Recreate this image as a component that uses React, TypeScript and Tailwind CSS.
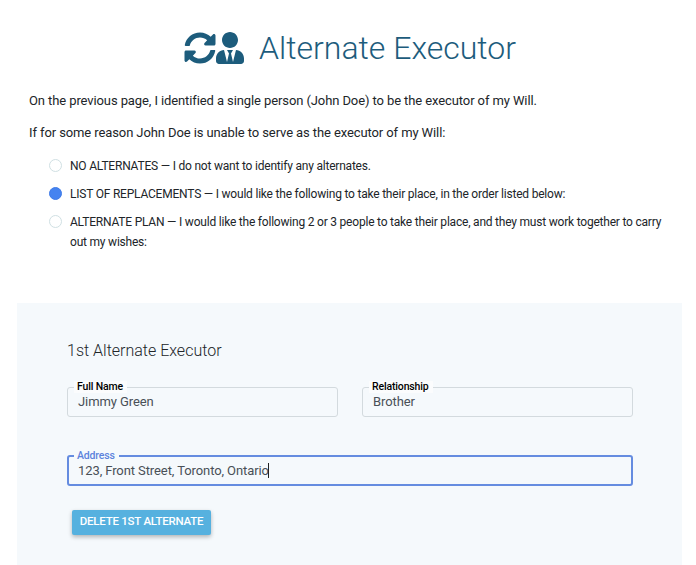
import { FaSyncAlt, FaUserTie } from "react-icons/fa";

function Option({ checked, text }: { checked?: boolean; text: string }) {
  return (
    <label className="flex gap-2">
      <span
        className={`mt-[3px] h-[13px] w-[13px] shrink-0 rounded-full border ${
          checked ? "border-[#3f7be8] bg-[#4583f0]" : "border-[#d0e0e3] bg-white"
        }`}
      />
      <span className="text-[12px] leading-5 tracking-[-0.21px]">{text}</span>
    </label>
  );
}

function Field({ label, value, focused }: { label: string; value: string; focused?: boolean }) {
  return (
    <fieldset
      className={`flex h-[36px] min-w-0 flex-1 rounded-[3px] ${
        focused ? "border-2 border-[#658ce0] pl-[9px]" : "border border-[#d3dade] pl-[10px]"
      }`}
    >
      <legend
        className={`-ml-[4px] h-[12px] pr-1 pl-[3px] text-[10.5px] leading-[12px] font-medium tracking-[-0.15px] ${
          focused ? "text-[#5c83dc]" : "bg-[#fbfcfd] text-black"
        }`}
      >
        {label}
      </legend>
      <span className="flex h-[17px] items-center text-[13px] leading-[17px] tracking-[-0.09px] text-[#495057]">
        {value}
        {focused && <span className="-ml-px h-[15px] w-px bg-[#222]" />}
      </span>
    </fieldset>
  );
}

export default function App() {
  return (
    <main className="h-[565px] w-[696px] overflow-hidden bg-white font-['Roboto','Liberation_Sans',sans-serif] text-[#212529]">
      <h1 className="flex h-[64px] items-center pt-[31px] pl-[184px] text-[#1d5c7c]">
        <FaSyncAlt className="h-[32px] w-[32px]" />
        <FaUserTie className="h-[32px] w-[28px]" />
        <span className="ml-[15px] text-[32px] leading-[40px] font-light whitespace-nowrap">Alternate Executor</span>
      </h1>
      <section className="pl-[29px] text-[13px] leading-5 tracking-[-0.1px]">
        <p className="mt-[27px]">On the previous page, I identified a single person (John Doe) to be the executor of my Will.</p>
        <p className="mt-3">If for some reason John Doe is unable to serve as the executor of my Will:</p>
        <div className="mt-[13px] flex flex-col gap-2 pr-[26px] pl-5">
          <Option text="NO ALTERNATES — I do not want to identify any alternates." />
          <Option checked text="LIST OF REPLACEMENTS — I would like the following to take their place, in the order listed below:" />
          <Option text="ALTERNATE PLAN — I would like the following 2 or 3 people to take their place, and they must work together to carry out my wishes:" />
        </div>
      </section>
      <section className="mt-[51px] ml-[17px] h-[262px] w-[665px] bg-[#f5f9fc] pt-[38px] pr-[49px] pl-[50px]">
        <h2 className="text-[16px] leading-5 font-light">1st Alternate Executor</h2>
        <div className="mt-[20px] flex gap-6">
          <Field label="Full Name" value="Jimmy Green" />
          <Field label="Relationship" value="Brother" />
        </div>
        <div className="mt-[33px] flex">
          <Field label="Address" value="123, Front Street, Toronto, Ontario" focused />
        </div>
        <button className="mt-6 ml-[5px] h-[25px] w-[139px] rounded-[2px] bg-[#56b1df] pb-[2px] text-[11.5px] leading-[23px] font-medium tracking-[-0.24px] text-white shadow-[0_2px_4px_rgba(0,0,0,0.28)]">
          DELETE 1ST ALTERNATE
        </button>
      </section>
    </main>
  );
}
